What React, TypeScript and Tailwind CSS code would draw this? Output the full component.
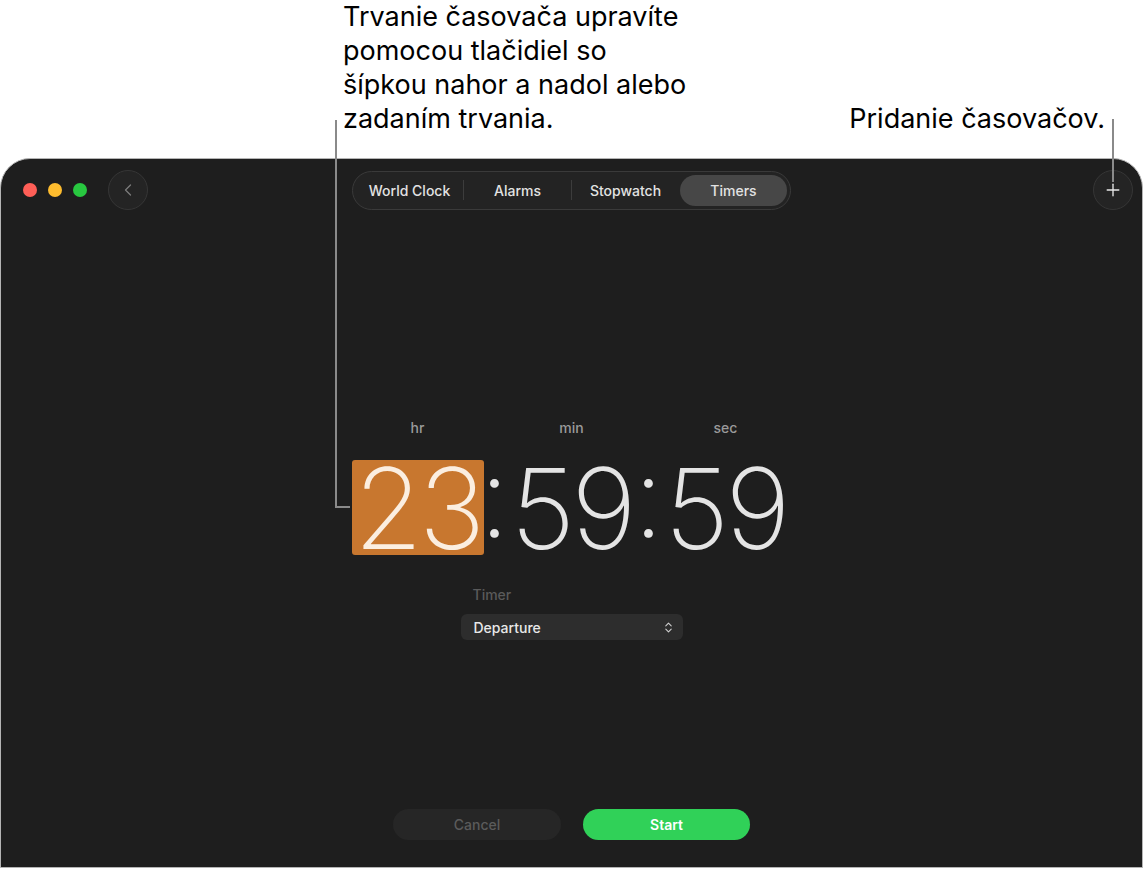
import { ChevronLeft, ChevronsUpDown, Plus } from "lucide-react";

const tabs = ["World Clock", "Alarms", "Stopwatch", "Timers"];

function Digits({ value, selected = false }: { value: string; selected?: boolean }) {
  return (
    <div
      className={`w-[132px] h-[95px] flex items-center justify-center rounded-[3px] ${
        selected ? "bg-[#c8772f] text-[#fbeee0]" : "text-[#e4e4e4]"
      }`}
    >
      <span className="text-[112px] leading-none font-extralight tracking-[-4px]">{value}</span>
    </div>
  );
}

function Colon() {
  return (
    <div className="w-[22px] h-[95px] flex items-center justify-center text-[#e4e4e4]">
      <span className="text-[112px] leading-none font-extralight [font-feature-settings:'case']">:</span>
    </div>
  );
}

export default function App() {
  return (
    <div className="relative w-[1144px] h-[870px] bg-white overflow-hidden font-['Inter',sans-serif]">
      {/* callouts */}
      <div className="h-[136px] flex items-end justify-between pl-[343px] pr-[39px] text-[27px] leading-[34px] text-black">
        <p className="-mt-[2px]">
          Trvanie časovača upravíte
          <br />
          pomocou tlačidiel so
          <br />
          šípkou nahor a nadol alebo
          <br />
          zadaním trvania.
        </p>
        <p>Pridanie časovačov.</p>
      </div>

      {/* window */}
      <div className="mt-[22px] w-[1143px] h-[710px] rounded-t-[30px] border border-[#b4b4b4] bg-[#1e1e1e] flex flex-col">
        <div className="h-[62px] grid grid-cols-[1fr_auto_1fr] items-center">
          <div className="flex items-center pl-[22px]">
            <div className="flex gap-[11px]">
              <span className="w-[14px] h-[14px] rounded-full bg-[#ff5f57]" />
              <span className="w-[14px] h-[14px] rounded-full bg-[#febc2e]" />
              <span className="w-[14px] h-[14px] rounded-full bg-[#28c840]" />
            </div>
            <div className="ml-[21px] w-[40px] h-[40px] rounded-full bg-[#242424] border border-[#363636] flex items-center justify-center text-[#7c7c7c]">
              <ChevronLeft size={20} strokeWidth={1.5} />
            </div>
          </div>

          <div className="flex items-center p-[3px] rounded-full bg-[#232323] border border-[#3a3a3a] text-[14px] font-medium text-[#e2e2e2]">
            {tabs.map((t, i) => (
              <div key={t} className="flex items-center">
                {i > 0 && <span className={`w-px h-[20px] ${i === 3 ? "bg-transparent" : "bg-[#3c3c3c]"}`} />}
                <div
                  className={`w-[107px] h-[31px] flex items-center justify-center rounded-full ${
                    t === "Timers" ? "bg-[#474747]" : ""
                  }`}
                >
                  {t}
                </div>
              </div>
            ))}
          </div>

          <div className="flex justify-end pr-[9px]">
            <div className="w-[40px] h-[40px] rounded-full bg-[#242424] border border-[#363636] flex items-center justify-center text-[#e8e8e8]">
              <Plus size={20} strokeWidth={1.6} />
            </div>
          </div>
        </div>

        <div className="flex flex-col items-center">
          <div className="mt-[197px] flex text-[14px] leading-[20px] font-medium text-[#9a9a9a]">
            <span className="w-[132px] text-center">hr</span>
            <span className="w-[22px]" />
            <span className="w-[132px] text-center">min</span>
            <span className="w-[22px]" />
            <span className="w-[132px] text-center">sec</span>
          </div>

          <div className="mt-[22px] flex">
            <Digits value="23" selected />
            <Colon />
            <Digits value="59" />
            <Colon />
            <Digits value="59" />
          </div>

          <div className="mt-[30px] w-[222px]">
            <p className="pl-[12px] text-[14px] leading-[20px] font-medium text-[#5a5a5a]">Timer</p>
            <div className="mt-[9px] h-[26px] rounded-[6px] bg-[#2d2d2d] flex items-center justify-between pl-[13px] pr-[8px] text-[14px] font-medium text-[#e8e8e8]">
              <span>Departure</span>
              <ChevronsUpDown size={13} strokeWidth={2} className="text-[#d0d0d0]" />
            </div>
          </div>

          <div className="mt-[169px] flex gap-[22px] text-[14px] font-medium">
            <div className="w-[168px] h-[31px] rounded-full bg-[#262626] flex items-center justify-center text-[#5b5b5b]">
              Cancel
            </div>
            <div className="w-[167px] h-[31px] rounded-full bg-[#30d158] flex items-center justify-center text-white font-semibold">
              Start
            </div>
          </div>
        </div>
      </div>

      {/* leader lines */}
      <div className="absolute left-[335px] top-[120px] w-[2px] h-[388px] bg-[#8a8a8a]" />
      <div className="absolute left-[335px] top-[506px] w-[15px] h-[2px] bg-[#8a8a8a]" />
      <div className="absolute left-[1112px] top-[119px] w-[2px] h-[63px] bg-[#8a8a8a]" />
    </div>
  );
}
